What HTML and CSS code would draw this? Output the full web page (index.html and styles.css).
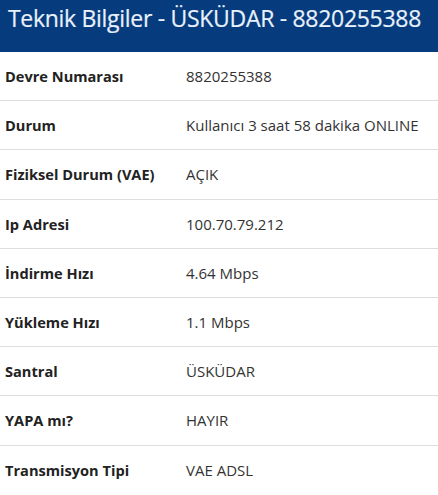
FILE: index.html
```html
<!DOCTYPE html>
<html lang="tr">
<head>
  <meta charset="UTF-8" />
  <title>Teknik Bilgiler</title>
  <link rel="stylesheet" href="styles.css">
</head>
<body>
  <div class="panel">
    <h1 class="panel-title">Teknik Bilgiler - ÜSKÜDAR - 8820255388</h1>
    <table class="info">
      <tbody>
        <tr><th>Devre Numarası</th><td>8820255388</td></tr>
        <tr><th>Durum</th><td>Kullanıcı 3 saat 58 dakika ONLINE</td></tr>
        <tr><th>Fiziksel Durum (VAE)</th><td>AÇIK</td></tr>
        <tr><th>Ip Adresi</th><td>100.70.79.212</td></tr>
        <tr><th>İndirme Hızı</th><td>4.64 Mbps</td></tr>
        <tr><th>Yükleme Hızı</th><td>1.1 Mbps</td></tr>
        <tr><th>Santral</th><td>ÜSKÜDAR</td></tr>
        <tr><th>YAPA mı?</th><td>HAYIR</td></tr>
        <tr><th>Transmisyon Tipi</th><td>VAE ADSL</td></tr>
      </tbody>
    </table>
  </div>
</body>
</html>
```

FILE: styles.css
```css
* { box-sizing: border-box; margin: 0; padding: 0; }
html, body { background: #ffffff; color: #333333; font-family: 'Open Sans', sans-serif; }
.panel { width: 438px; }
.panel-title { background: #063b7d; color: #e8f1fc; font-size: 23px; font-weight: 400; letter-spacing: -0.3px; height: 52px; line-height: 37px; padding: 0 8px; white-space: nowrap; -webkit-text-stroke: 0.2px #e8f1fc; }
.info { width: 100%; border-collapse: collapse; }
.info tr { border-bottom: 1px solid #dddddd; }
.info tr:last-child { border-bottom: none; }
.info th, .info td { padding: 14px 0 14px 5px; line-height: 20.2px; text-align: left; vertical-align: middle; }
.info th { width: 181px; font-size: 14.6px; font-weight: 700; color: #222222; }
.info td { font-size: 15px; color: #333333; }
```
